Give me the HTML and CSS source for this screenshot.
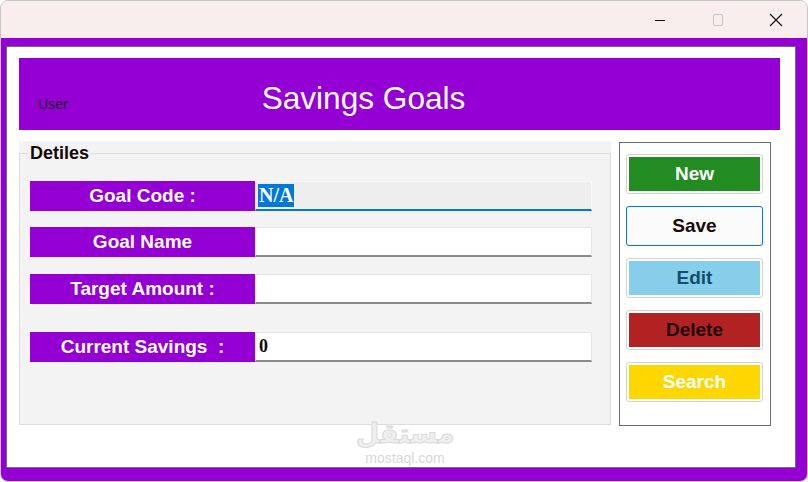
FILE: index.html
```html
<!DOCTYPE html>
<html lang="en">
<head>
    <meta charset="UTF-8">
    <meta name="viewport" content="width=device-width, initial-scale=1.0">
    <title>Savings Goals</title>
    <link rel="stylesheet" href="styles.css">
</head>
<body>

<div class="window">
    <div class="titlebar">
        <div class="win-btn">
            <svg width="12" height="12" viewBox="0 0 12 12"><line x1="1" y1="6.5" x2="11" y2="6.5" stroke="#111" stroke-width="1"/></svg>
        </div>
        <div class="win-btn">
            <svg width="12" height="12" viewBox="0 0 12 12"><rect x="1.5" y="0.5" width="9" height="11" rx="1.5" fill="none" stroke="#c4c4c4" stroke-width="1"/></svg>
        </div>
        <div class="win-btn">
            <svg width="14" height="14" viewBox="0 0 14 14"><path d="M1 1 L13 13 M13 1 L1 13" stroke="#111" stroke-width="1.1" fill="none"/></svg>
        </div>
    </div>

    <div class="frame">
        <div class="panel">
            <div class="header">
                <span class="user">User</span>
                <h1 class="title">Savings Goals</h1>
            </div>

            <div class="content">
                <div class="group">
                    <fieldset class="details">
                        <legend>Detiles</legend>
                        <div class="row row-code">
                            <div class="label">Goal Code :</div>
                            <div class="field field-readonly"><span class="selected">N/A</span></div>
                        </div>
                        <div class="row row-name">
                            <div class="label">Goal Name</div>
                            <div class="field"></div>
                        </div>
                        <div class="row row-target">
                            <div class="label">Target Amount :</div>
                            <div class="field"></div>
                        </div>
                        <div class="row">
                            <div class="label">Current Savings &nbsp;:</div>
                            <div class="field"><span class="value">0</span></div>
                        </div>
                    </fieldset>
                </div>

                <div class="actions">
                    <button class="btn btn-new"><span>New</span></button>
                    <button class="btn btn-save"><span>Save</span></button>
                    <button class="btn btn-edit"><span>Edit</span></button>
                    <button class="btn btn-delete"><span>Delete</span></button>
                    <button class="btn btn-search"><span>Search</span></button>
                </div>
            </div>

            <div class="watermark">
                <div class="wm-ar">مستقل</div>
                <div class="wm-en">mostaql.com</div>
            </div>
        </div>
    </div>
</div>

</body>
</html>
```

FILE: styles.css
```css
:root {
    --purple: #9400d3;
    --title-bg: #f8eeee;
    --group-bg: #f3f3f3;
    --accent: #0078d7;
    --font-family: 'Liberation Sans', Arial, sans-serif;
}

* {
    box-sizing: border-box;
}

body {
    margin: 0;
    font-family: var(--font-family);
    background: #ffffff;
}

.window {
    width: 808px;
    height: 482px;
    border: 1px solid #c6c6c6;
    border-radius: 8px;
    overflow: hidden;
    display: flex;
    flex-direction: column;
}

.titlebar {
    height: 37px;
    background: var(--title-bg);
    display: flex;
    justify-content: flex-end;
    padding-right: 2px;
}

.win-btn {
    width: 58px;
    display: flex;
    align-items: center;
    justify-content: center;
}

.frame {
    flex: 1;
    background: var(--purple);
    padding: 8px 11px 13px 5px;
    display: flex;
}

.panel {
    position: relative;
    flex: 1;
    background: #ffffff;
    border: 1px solid #6e6e6e;
    padding: 11px 15px 0 12px;
    overflow: hidden;
}

.header {
    height: 72px;
    background: var(--purple);
    display: flex;
    align-items: baseline;
    padding: 22px 0 0 19px;
}

.user {
    font-family: 'Noto Sans', sans-serif;
    font-size: 14px;
    color: #1c1c1c;
    line-height: 20px;
}

.title {
    margin: 0 0 0 193px;
    font-size: 31.6px;
    font-weight: normal;
    line-height: 36px;
    color: #ffffff;
}

.content {
    display: flex;
    gap: 8px;
    margin-top: 11px;
}

.group {
    width: 592px;
    height: 284px;
    background: var(--group-bg);
    padding-top: 2px;
}

.details {
    margin: 0;
    height: 282px;
    border: 1px solid #dcdcdc;
    padding: 18px 18px 0 10px;
}

.details legend {
    margin-left: -2px;
    padding: 0 2px;
    font-size: 18px;
    font-weight: bold;
    line-height: 20px;
    color: #140808;
}

.row {
    display: flex;
    height: 30px;
}

.row-code {
    margin-bottom: 16px;
}

.row-name {
    margin-bottom: 17px;
}

.row-target {
    margin-bottom: 28px;
}

.label {
    width: 225px;
    background: var(--purple);
    color: #ffffff;
    font-weight: bold;
    font-size: 19px;
    display: flex;
    align-items: center;
    justify-content: center;
}

.field {
    flex: 1;
    background: #ffffff;
    border: 1px solid #e6e6e6;
    border-bottom: 2px solid #8a8a8a;
    display: flex;
    align-items: center;
    padding-left: 2px;
    font-family: 'Liberation Serif', serif;
    font-weight: bold;
    color: #140808;
}

.field-readonly {
    background: #eeeeee;
    border-color: #f8f8f8;
    border-bottom: 2px solid var(--accent);
}

.selected {
    background: var(--accent);
    color: #ffffff;
    font-size: 20px;
    line-height: 23px;
    padding: 0 1px;
}

.value {
    font-size: 18px;
    padding-left: 1px;
}

.actions {
    width: 152px;
    height: 284px;
    margin-top: 1px;
    background: #ffffff;
    border: 1px solid #6b6b6b;
    padding: 11px 0 0 6px;
    display: flex;
    flex-direction: column;
    gap: 12px;
}

.btn {
    width: 137px;
    height: 40px;
    padding: 2px;
    border: 1px solid #d2d2d2;
    border-radius: 3px;
    background: #ffffff;
    font-family: var(--font-family);
    font-size: 19px;
    font-weight: bold;
    cursor: pointer;
}

.btn span {
    display: flex;
    align-items: center;
    justify-content: center;
    height: 100%;
}

.btn-new span {
    background: #228b22;
    color: #ffffff;
}

.btn-save {
    border-color: var(--accent);
    background: #fbfbfb;
}

.btn-save span {
    color: #1a0a0a;
}

.btn-edit span {
    background: #87ceeb;
    color: #154e6c;
}

.btn-delete span {
    background: #b22222;
    color: #1c0202;
}

.btn-search span {
    background: #ffd700;
    color: #ffffff;
}

.watermark {
    position: absolute;
    left: 348px;
    top: 370px;
    width: 100px;
    text-align: center;
    color: #efefef;
    pointer-events: none;
}

.wm-ar {
    font-family: 'DejaVu Sans', sans-serif;
    font-size: 27px;
    font-weight: bold;
    line-height: 34px;
    -webkit-text-stroke: 1px #dadada;
}

.wm-en {
    font-size: 14px;
    line-height: 14px;
    color: #d8d8d8;
}
```
